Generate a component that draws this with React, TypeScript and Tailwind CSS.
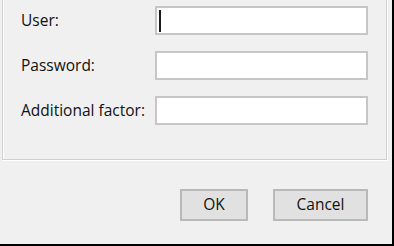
import React from 'react';

const fields = ['User:', 'Password:', 'Additional factor:'];

const App: React.FC = () => {
    return (
        <div
            className="w-[394px] h-[246px] bg-[#f0f0f0] border-r-2 border-b-2 border-black text-[15.5px] text-[#111] overflow-hidden"
            style={{ fontFamily: '"Open Sans", "Noto Sans", sans-serif' }}
        >
            {/* Group box (top edge is cut off) */}
            <div className="ml-[2px] w-[386px] h-[161px] border-r border-b border-white">
                <div className="h-full border-l border-r border-b border-[#d0d0d0] shadow-[inset_1px_0_0_#fff] pl-[18px] pt-[6px]">
                    <div className="grid grid-cols-[134px_213px] gap-y-[16px]">
                        {fields.map((label, i) => (
                            <React.Fragment key={label}>
                                <div className="h-[29px] flex items-center pt-[1px]">{label}</div>
                                <div className="h-[29px] bg-white border-2 border-[#c6c6c6] flex items-start">
                                    {i === 0 && (
                                        <span className="mt-[2px] ml-[2px] w-[2px] h-[22px] bg-[#1a1a1a]" />
                                    )}
                                </div>
                            </React.Fragment>
                        ))}
                    </div>
                </div>
            </div>

            {/* Dialog buttons */}
            <div className="flex justify-end gap-[25px] pr-[24px] mt-[28px]">
                <button className="w-[68px] h-[32px] bg-[#e1e1e1] border-2 border-[#b9b9b9] flex items-center justify-center">
                    OK
                </button>
                <button className="w-[95px] h-[32px] bg-[#e1e1e1] border-2 border-[#b9b9b9] flex items-center justify-center">
                    Cancel
                </button>
            </div>
        </div>
    );
};

export default App;
